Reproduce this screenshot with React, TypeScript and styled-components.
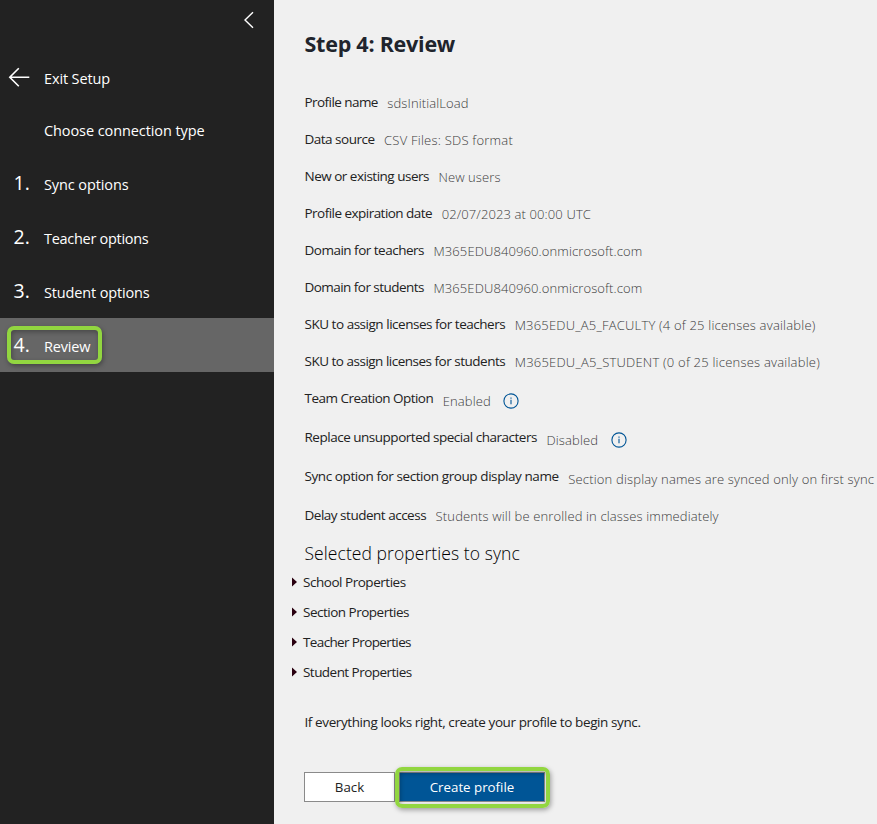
import React from "react";
import styled, { createGlobalStyle } from "styled-components";

const GlobalStyle = createGlobalStyle`
  * { box-sizing: border-box; }
  body {
    margin: 0;
    overflow: hidden;
    background: #f0f0f0;
    font-family: "Open Sans", "Noto Sans", sans-serif;
  }
`;

const Page = styled.div`
  display: flex;
  width: 877px;
  height: 824px;
  overflow: hidden;
`;

const Sidebar = styled.nav`
  flex: none;
  width: 274px;
  background: #222;
  color: #fff;
`;

const CollapseBar = styled.div`
  display: flex;
  justify-content: flex-end;
  height: 51px;
  padding: 11px 20px 0 0;
`;

const NavRow = styled.div<{ $height?: number; $active?: boolean }>`
  position: relative;
  display: flex;
  align-items: center;
  height: ${(p) => p.$height ?? 54}px;
  background: ${(p) => (p.$active ? "#666" : "transparent")};
`;

const NavMarker = styled.div`
  flex: none;
  width: 44px;
  height: 30px;
  padding-left: 13.5px;
  font-size: 19.5px;
  line-height: 29px;
`;

const ArrowMarker = styled.div`
  display: flex;
  flex: none;
  width: 44px;
  padding: 0 0 2px 8px;
`;

const Text = styled.span<{ $track?: number }>`
  letter-spacing: ${(p) => p.$track ?? 0}px;
  white-space: nowrap;
`;

const NavText = styled(Text)<{ $drop?: number }>`
  padding-top: ${(p) => p.$drop ?? 2}px;
  font-size: 14.5px;
  line-height: 20px;
`;

const Highlight = styled.div`
  position: absolute;
  pointer-events: none;
  border: 4px solid #92d640;
  border-radius: 7px;
  box-shadow: 1px 2px 5px rgba(0, 0, 0, 0.35), inset 1px 2px 5px rgba(0, 0, 0, 0.3);
`;

const StepHighlight = styled(Highlight)`
  left: 7px;
  top: 8px;
  width: 95px;
  height: 38px;
`;

const ButtonHighlight = styled(Highlight)`
  inset: -5px -5px -6px -4px;
`;

const Main = styled.main`
  flex: 1;
  min-width: 0;
  padding: 29px 0 0 30.5px;
  color: #222;
`;

const Title = styled.h1`
  margin: 0 0 33px;
  color: #20242c;
  font-size: 21.5px;
  font-weight: 700;
  letter-spacing: -0.24px;
  line-height: 30px;
`;

const Field = styled.div<{ $tall?: boolean }>`
  display: flex;
  align-items: flex-start;
  gap: 9.5px;
  height: ${(p) => (p.$tall ? 39 : 37)}px;
  font-size: 13.5px;
  line-height: 20px;
`;

const Value = styled(Text)<{ $drop: number }>`
  padding-top: ${(p) => p.$drop}px;
  color: #3c3c3c;
  font-size: 13px;
  font-weight: 300;
`;

const InfoSlot = styled.span`
  display: flex;
  padding: 5px 0 0 3px;
`;

const SectionTitle = styled.h2`
  margin: 0;
  height: 25px;
  font-size: 17.5px;
  font-weight: 300;
  color: #000;
  letter-spacing: 0.07px;
  line-height: 22px;
`;

const PropertyRow = styled.div`
  display: flex;
  align-items: center;
  gap: 5px;
  height: 30px;
  margin-left: -13.5px;
  font-size: 13.5px;
  line-height: 20px;
`;

const Note = styled.p`
  margin: 25px 0 40px;
  font-size: 13.5px;
  line-height: 20px;
`;

const Actions = styled.div`
  display: flex;
  gap: 4px;
  margin-left: -0.5px;
`;

const ActionSlot = styled.div`
  position: relative;
`;

const Button = styled.button<{ $primary?: boolean }>`
  display: block;
  width: ${(p) => (p.$primary ? 146 : 91)}px;
  height: 30px;
  padding: 0;
  border: 1px solid #8a8a8a;
  background: ${(p) => (p.$primary ? "#005596" : "#fff")};
  color: ${(p) => (p.$primary ? "#fff" : "#222")};
  font-family: inherit;
  font-size: 13.3px;
  line-height: 27px;
`;

const steps = [
  { marker: "1.", label: "Sync options", track: -0.1 },
  { marker: "2.", label: "Teacher options", track: -0.29 },
  { marker: "3.", label: "Student options", track: -0.15 },
  { marker: "4.", label: "Review", track: -0.2, active: true },
];

interface FieldData {
  label: string;
  labelTrack: number;
  value: string;
  valueTrack: number;
  drop?: number;
  tall?: boolean;
  info?: boolean;
}

const fields: FieldData[] = [
  { label: "Profile name", labelTrack: -0.56, value: "sdsInitialLoad", valueTrack: 0.1 },
  { label: "Data source", labelTrack: -0.5, value: "CSV Files: SDS format", valueTrack: 0.23 },
  { label: "New or existing users", labelTrack: -0.5, value: "New users", valueTrack: 0.09 },
  { label: "Profile expiration date", labelTrack: -0.53, value: "02/07/2023 at 00:00 UTC", valueTrack: 0.12 },
  { label: "Domain for teachers", labelTrack: -0.5, value: "M365EDU840960.onmicrosoft.com", valueTrack: 0.11 },
  { label: "Domain for students", labelTrack: -0.54, value: "M365EDU840960.onmicrosoft.com", valueTrack: 0.11 },
  { label: "SKU to assign licenses for teachers", labelTrack: -0.475, value: "M365EDU_A5_FACULTY (4 of 25 licenses available)", valueTrack: 0.2 },
  { label: "SKU to assign licenses for students", labelTrack: -0.495, value: "M365EDU_A5_STUDENT (0 of 25 licenses available)", valueTrack: 0.215 },
  { label: "Team Creation Option", labelTrack: -0.52, value: "Enabled", valueTrack: 0.12, drop: 3, tall: true, info: true },
  { label: "Replace unsupported special characters", labelTrack: -0.485, value: "Disabled", valueTrack: 0.15, drop: 3, tall: true, info: true },
  { label: "Sync option for section group display name", labelTrack: -0.415, value: "Section display names are synced only on first sync", valueTrack: 0.175, drop: 3, tall: true },
  { label: "Delay student access", labelTrack: -0.49, value: "Students will be enrolled in classes immediately", valueTrack: 0.135 },
];

const properties = [
  { label: "School Properties", track: -0.47 },
  { label: "Section Properties", track: -0.5 },
  { label: "Teacher Properties", track: -0.63 },
  { label: "Student Properties", track: -0.54 },
];

const ChevronIcon = () => (
  <svg width="12" height="18" viewBox="0 0 12 18" fill="none" stroke="#fff" strokeWidth="1.4">
    <path d="M11 1.2 3 9l8 7.8" />
  </svg>
);

const BackArrowIcon = () => (
  <svg width="22" height="20" viewBox="0 0 22 20" fill="none" stroke="#fff" strokeWidth="1.6">
    <path d="M10.8 1.2 1.8 10.2l9 9M1.8 10.3H21.3" />
  </svg>
);

const InfoIcon = () => (
  <svg width="16" height="16" viewBox="0 0 16 16" fill="none" stroke="#005596">
    <circle cx="8" cy="8" r="7.1" strokeWidth="1.1" />
    <path d="M8 6.8v4.4M8 4.5v1.2" strokeWidth="1.1" />
  </svg>
);

const CaretIcon = () => (
  <svg width="7" height="10" viewBox="0 0 7 10">
    <path d="M1 0.5 6 5 1 9.5Z" fill="#2a0010" />
  </svg>
);

export default function App() {
  return (
    <Page>
      <GlobalStyle />
      <Sidebar>
        <CollapseBar>
          <ChevronIcon />
        </CollapseBar>
        <NavRow $height={53}>
          <ArrowMarker>
            <BackArrowIcon />
          </ArrowMarker>
          <NavText $track={-0.13}>Exit Setup</NavText>
        </NavRow>
        <NavRow $height={52}>
          <NavMarker />
          <NavText $track={-0.09}>Choose connection type</NavText>
        </NavRow>
        {steps.map((s) => (
          <NavRow key={s.label} $active={s.active}>
            <NavMarker>{s.marker}</NavMarker>
            <NavText $track={s.track} $drop={4}>
              {s.label}
            </NavText>
            {s.active && <StepHighlight />}
          </NavRow>
        ))}
      </Sidebar>
      <Main>
        <Title>Step 4: Review</Title>
        {fields.map((f) => (
          <Field key={f.label} $tall={f.tall}>
            <Text $track={f.labelTrack}>{f.label}</Text>
            <Value $track={f.valueTrack} $drop={f.drop ?? 1}>
              {f.value}
            </Value>
            {f.info && (
              <InfoSlot>
                <InfoIcon />
              </InfoSlot>
            )}
          </Field>
        ))}
        <SectionTitle>Selected properties to sync</SectionTitle>
        {properties.map((p) => (
          <PropertyRow key={p.label}>
            <CaretIcon />
            <Text $track={p.track}>{p.label}</Text>
          </PropertyRow>
        ))}
        <Note>
          <Text $track={-0.4}>If everything looks right, create your profile to begin sync.</Text>
        </Note>
        <Actions>
          <Button>Back</Button>
          <ActionSlot>
            <Button $primary>Create profile</Button>
            <ButtonHighlight />
          </ActionSlot>
        </Actions>
      </Main>
    </Page>
  );
}
